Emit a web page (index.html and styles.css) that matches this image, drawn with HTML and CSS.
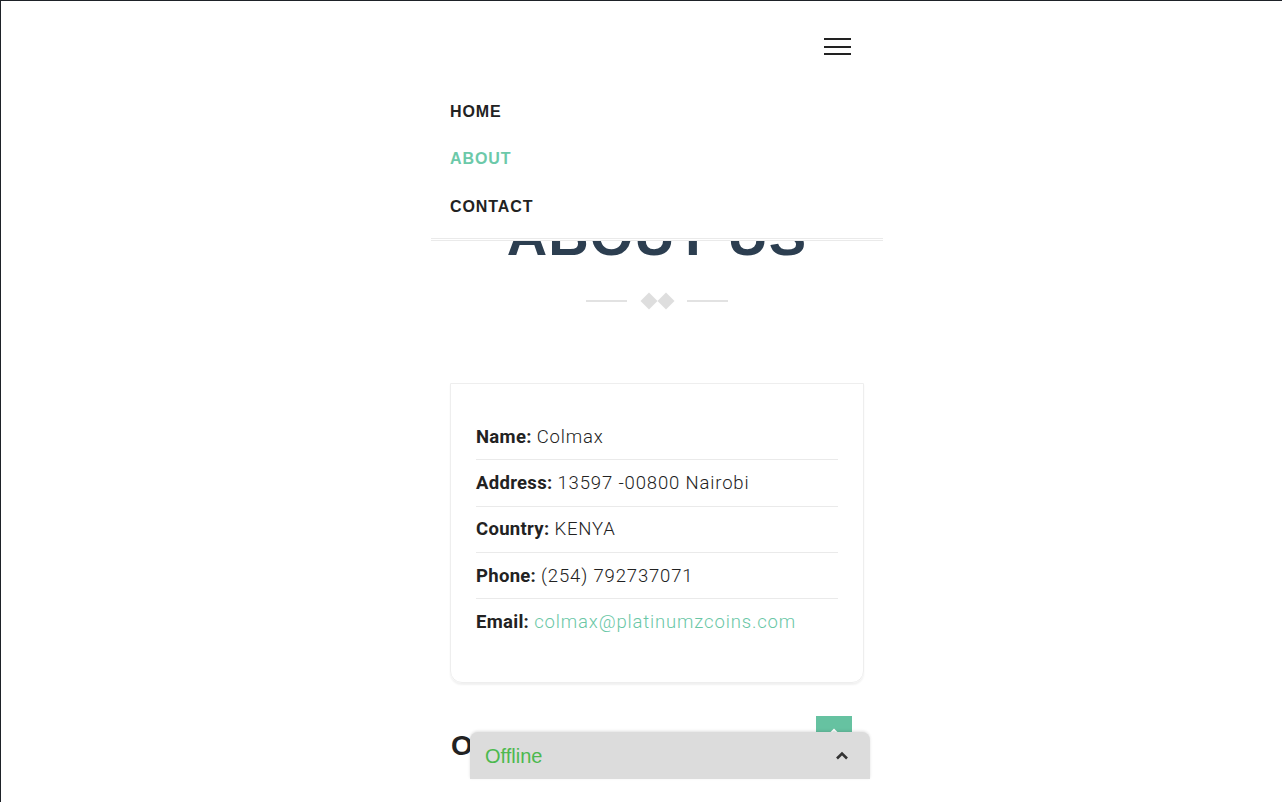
FILE: index.html
```html
<!DOCTYPE html>
<html lang="en">
<head>
<meta charset="utf-8">
<title>About Us</title>
<link rel="stylesheet" href="styles.css">
</head>
<body>
<div class="frame">
  <div class="page">
    <header class="topbar">
      <button class="burger" aria-label="Menu">
        <span></span><span></span><span></span>
      </button>
    </header>
    <div class="stage">
      <section class="hero">
        <h1 class="title">ABOUT US</h1>
        <div class="divider">
          <span class="rule"></span>
          <span class="diamond"></span>
          <span class="diamond"></span>
          <span class="rule"></span>
        </div>
      </section>
      <nav class="menu">
        <ul>
          <li><a href="#">HOME</a></li>
          <li><a href="#" class="active">ABOUT</a></li>
          <li><a href="#">CONTACT</a></li>
        </ul>
      </nav>
    </div>
    <div class="content">
      <div class="card">
        <ul class="info">
          <li><b>Name:</b> Colmax</li>
          <li><b>Address:</b> 13597 -00800 Nairobi</li>
          <li><b>Country:</b> KENYA</li>
          <li><b>Phone:</b> (254) 792737071</li>
          <li><b>Email:</b> <a href="#">colmax@platinumzcoins.com</a></li>
        </ul>
      </div>
      <h2 class="section-title">Our Team</h2>
    </div>
  </div>
  <a href="#" class="totop" aria-label="Back to top">
    <svg width="10" height="8" viewBox="0 0 10 8"><path d="M1 6 L5 2 L9 6" fill="none" stroke="#fff" stroke-width="2"/></svg>
  </a>
  <div class="chat">
    <span class="chat-status">Offline</span>
    <svg class="chev" width="14" height="9" viewBox="0 0 14 9"><path d="M2 7.5 L7 2.5 L12 7.5" fill="none" stroke="#333" stroke-width="2.6"/></svg>
  </div>
</div>
</body>
</html>
```
FILE: styles.css
```css
* { box-sizing: border-box; }
html, body { margin: 0; padding: 0; height: 100%; }
body {
  background: #fff;
  font-family: Roboto, "Liberation Sans", Arial, sans-serif;
  color: #333;
  overflow: hidden;
}
.frame {
  position: relative;
  height: 802px;
  border-top: 1px solid #1e2228;
  border-left: 1px solid #1e2228;
  overflow: hidden;
}
.page {
  width: 452px;
  margin-left: 430px;
}
.topbar {
  height: 87px;
  display: flex;
  justify-content: flex-end;
  padding-right: 32px;
  padding-top: 37px;
}
.burger {
  width: 27px;
  height: 17px;
  padding: 0;
  border: 0;
  background: none;
  display: flex;
  flex-direction: column;
  justify-content: space-between;
}
.burger span {
  display: block;
  height: 2px;
  background: #222;
}
.stage { position: relative; }
.menu {
  position: absolute;
  left: 0;
  top: 0;
  width: 452px;
  height: 153px;
  background: #fff;
  border-bottom: 3px double #eaeaea;
}
.menu ul { list-style: none; margin: 0; padding: 0 0 0 19px; }
.menu li { height: 47.5px; display: flex; align-items: center; }
.menu a {
  font-family: "Liberation Sans", Arial, sans-serif;
  font-weight: bold;
  font-size: 16px;
  letter-spacing: 0.9px;
  color: #222;
  text-decoration: none;
}
.menu a.active { color: #6cc9a9; }
.hero {
  padding-top: 120px;
  text-align: center;
}
.title {
  margin: 0;
  font-family: "Liberation Sans", Arial, sans-serif;
  font-weight: bold;
  font-size: 56px;
  line-height: 56px;
  color: #2c3e50;
  letter-spacing: 1px;
}
.divider {
  margin-top: 31px;
  display: flex;
  justify-content: center;
  align-items: center;
}
.rule { width: 41px; height: 2px; background: #e2e2e2; }
.rule:first-child { margin-right: 13px; }
.rule:last-child { margin-left: 13px; }
.diamond {
  width: 12px;
  height: 12px;
  background: #dedede;
  transform: rotate(45deg);
  margin: 0 2.5px;
}
.content { padding: 76px 19px 0 19px; }
.card {
  border: 1px solid #eeeeee;
  border-radius: 0 0 12px 12px;
  box-shadow: 0 2px 2px rgba(0,0,0,0.06);
  padding: 30px 25px 37px 25px;
}
.info { list-style: none; margin: 0; padding: 0; }
.info li {
  font-size: 18.5px;
  font-weight: 300;
  letter-spacing: 0.85px;
  color: #222;
  height: 46.3px;
  display: flex;
  align-items: center;
  gap: 5px;
  border-bottom: 1px solid #eaeaea;
}
.info li:last-child { border-bottom: 0; }
.info b { font-weight: 700; color: #222; letter-spacing: 0.3px; }
.info a { color: #6ac7a6; text-decoration: none; }
.section-title {
  margin: 47px 0 0 1px;
  font-family: "Liberation Sans", Arial, sans-serif;
  font-size: 28px;
  font-weight: bold;
  color: #222;
}
.totop {
  position: absolute;
  left: 815px;
  top: 715px;
  width: 36px;
  height: 36px;
  background: #66c2a1;
  display: flex;
  justify-content: center;
  padding-top: 12px;
}
.chat {
  position: absolute;
  left: 469px;
  top: 731px;
  width: 400px;
  height: 47px;
  background: #dcdcdc;
  border-radius: 8px 8px 0 0;
  box-shadow: 0 -1px 3px rgba(0,0,0,0.12);
  display: flex;
  align-items: center;
  justify-content: space-between;
  padding: 2px 21px 0 15px;
}
.chat-status {
  font-family: "Liberation Sans", Arial, sans-serif;
  font-size: 20px;
  color: #4cb94f;
}
.chev { margin-top: -2px; }
```
